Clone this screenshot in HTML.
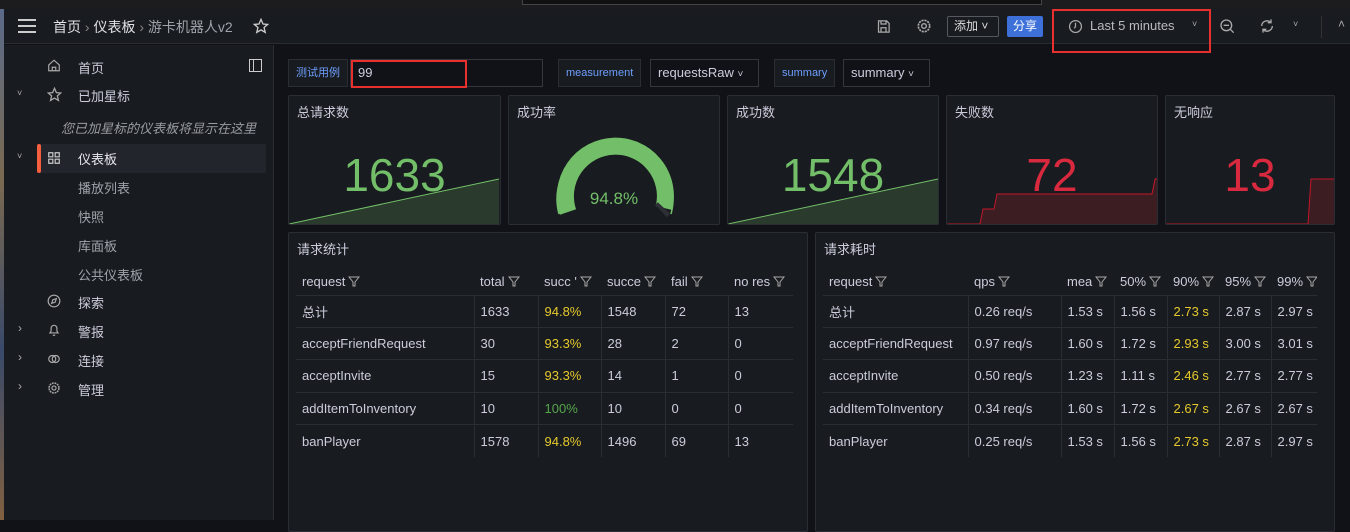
<!DOCTYPE html>
<html><head><meta charset="utf-8"><style>
*{box-sizing:border-box;margin:0;padding:0}
body{width:1350px;height:520px;overflow:hidden;background:#111217;font-family:"Liberation Sans","Noto Sans CJK SC",sans-serif;color:#ccccdc;font-size:13px;position:relative}
.a{position:absolute}
.top{left:0;top:0;width:1350px;height:9px;background:#1c1c1e}
.hdr{left:4px;top:9px;width:1346px;height:35px;background:#181b1f;border-bottom:1px solid #2a2c31}
.side{left:4px;top:45px;width:270px;height:475px;background:#181b1f;border-right:1px solid #2a2c31}
.panel{background:#181b1f;border:1px solid #2a2d33;border-radius:2px}
.pt{position:absolute;left:8px;top:6px;font-size:13px;color:#ccccdc}
.big{position:absolute;width:100%;text-align:center;font-size:46px}
.vl{background:#181b1f;border:1px solid #2a2d33;height:28px;color:#6e9fff;font-size:11px;line-height:26px;padding:0 7px}
.vi{border:1px solid #34373d;height:28px;line-height:26px;padding:0 7px;font-size:13px;color:#ccccdc}
.nav{position:absolute;left:78px;font-size:13px;color:#ccccdc}
.sub{color:#a0a3ab}
.ic{position:absolute;left:47px}
td{height:32.4px;border-top:1px solid #2a2d33;border-left:1px solid #2a2d33;padding-left:6px;white-space:nowrap;overflow:hidden;font-size:13px;color:#ccccdc}
td:first-child{border-left:none}
th{height:27px;text-align:left;font-weight:normal;padding-left:6px;white-space:nowrap;overflow:hidden;font-size:13px;color:#ccccdc}
table{border-collapse:collapse;table-layout:fixed;position:absolute}
.y{color:#e5c92d}.g{color:#56a64b}
.f{display:inline-block;width:12px;height:11px;vertical-align:-1px;margin-left:3px}
</style></head><body>
<div class="a top"></div>
<div class="a" style="left:522px;top:0;width:520px;height:5px;border:1px solid #444;border-top:none;background:#111"></div>
<div class="a" style="left:0;top:9px;width:4px;height:511px;background:linear-gradient(#5a6a8a,#7a6a50,#3a4a6a,#806040)"></div>
<div class="a hdr"></div>
<!-- header -->
<div class="a" style="left:18px;top:19px;width:18px;height:14px;border-top:2px solid #ccc;border-bottom:2px solid #ccc"><div style="margin-top:4px;height:2px;background:#ccc"></div></div>
<div class="a" style="left:53px;top:17px;font-size:14px;color:#e0e0e8">首页 <span style="color:#888">›</span> 仪表板 <span style="color:#888">›</span> <span style="color:#a0a3ab">游卡机器人v2</span></div>
<svg class="a" style="left:253px;top:18px" width="16" height="16" viewBox="0 0 24 24"><path d="M12 2l3 7 7 .6-5.4 4.6 1.7 7.3L12 17.8 5.7 21.5l1.7-7.3L2 9.6 9 9z" fill="none" stroke="#ccc" stroke-width="2"/></svg>
<svg class="a" style="left:876px;top:19px" width="15" height="15" viewBox="0 0 24 24"><path d="M4 3h13l4 4v14H4z M8 3v5h8V3 M8 14h8v7H8z" fill="none" stroke="#aaa" stroke-width="2"/></svg>
<svg class="a" style="left:916px;top:18px" width="16" height="16" viewBox="0 0 24 24"><circle cx="12" cy="12" r="3.5" fill="none" stroke="#aaa" stroke-width="2"/><circle cx="12" cy="12" r="8.5" fill="none" stroke="#aaa" stroke-width="2.5" stroke-dasharray="3.2 1.3"/></svg>
<div class="a" style="left:947px;top:16px;width:52px;height:21px;border:1px solid #55585e;border-radius:2px;font-size:12px;line-height:19px;padding-left:6px;color:#ddd">添加 ˅</div>
<div class="a" style="left:1007px;top:16px;width:36px;height:21px;background:#3d71d9;border-radius:2px;font-size:12px;line-height:21px;text-align:center;color:#fff">分享</div>
<div class="a" style="left:1052px;top:9px;width:159px;height:44px;border:2px solid #e8302f"></div>
<svg class="a" style="left:1068px;top:19px" width="15" height="15" viewBox="0 0 24 24"><circle cx="12" cy="12" r="9.5" fill="none" stroke="#aaa" stroke-width="2"/><path d="M12 6v6l-2 3" fill="none" stroke="#aaa" stroke-width="2"/></svg>
<div class="a" style="left:1090px;top:18px;font-size:13px;color:#b8bac0">Last 5 minutes</div>
<div class="a" style="left:1192px;top:19px;font-size:9px;color:#aaa">˅</div>
<svg class="a" style="left:1219px;top:18px" width="16" height="16" viewBox="0 0 24 24"><circle cx="11" cy="11" r="8" fill="none" stroke="#aaa" stroke-width="2"/><path d="M7 11h8M17 17l5 5" stroke="#aaa" stroke-width="2"/></svg>
<svg class="a" style="left:1259px;top:18px" width="16" height="16" viewBox="0 0 24 24"><path d="M20 12a8 8 0 0 1-14 5M4 12a8 8 0 0 1 14-5M18 2v5h-5M6 22v-5h5" fill="none" stroke="#aaa" stroke-width="2"/></svg>
<div class="a" style="left:1293px;top:19px;font-size:9px;color:#aaa">˅</div>
<div class="a" style="left:1321px;top:16px;width:1px;height:22px;background:#333"></div>
<div class="a" style="left:1338px;top:17px;font-size:12px;color:#aaa">˄</div>
<!-- sidebar -->
<div class="a side"></div>
<div class="a" style="left:37px;top:144px;width:229px;height:29px;background:#22252b;border-radius:2px"></div>
<div class="a" style="left:37px;top:144px;width:4px;height:29px;background:#f55f3e;border-radius:2px"></div>
<svg class="ic" style="top:58px" width="14" height="15" viewBox="0 0 24 24"><path d="M3 11L12 3l9 8v10H3z M9 21v-6h6v6" fill="none" stroke="#aaa" stroke-width="2"/></svg>
<div class="nav" style="top:58px">首页</div>
<div class="a" style="left:249px;top:59px;width:13px;height:13px;border:1.5px solid #ccc"><div style="width:4px;height:100%;border-right:1.5px solid #ccc"></div></div>
<div class="a" style="left:17px;top:88px;color:#aaa;font-size:9px">˅</div>
<svg class="ic" style="top:87px" width="15" height="15" viewBox="0 0 24 24"><path d="M12 2l3 7 7 .6-5.4 4.6 1.7 7.3L12 17.8 5.7 21.5l1.7-7.3L2 9.6 9 9z" fill="none" stroke="#aaa" stroke-width="2"/></svg>
<div class="nav" style="top:86px">已加星标</div>
<div class="a" style="left:61px;top:118px;font-style:italic;color:#9a9ca4;font-size:13px">您已加星标的仪表板将显示在这里</div>
<div class="a" style="left:17px;top:151px;color:#aaa;font-size:9px">˅</div>
<svg class="ic" style="top:151px" width="14" height="14" viewBox="0 0 24 24"><path d="M3 3h7v7H3zM14 3h7v7h-7zM3 14h7v7H3zM14 14h7v7h-7z" fill="none" stroke="#ccc" stroke-width="2"/></svg>
<div class="nav" style="top:149px;color:#e8e8ee">仪表板</div>
<div class="nav sub" style="top:178px">播放列表</div>
<div class="nav sub" style="top:207px">快照</div>
<div class="nav sub" style="top:236px">库面板</div>
<div class="nav sub" style="top:265px">公共仪表板</div>
<svg class="ic" style="top:294px" width="14" height="14" viewBox="0 0 24 24"><circle cx="12" cy="12" r="10" fill="none" stroke="#aaa" stroke-width="2"/><path d="M16 8l-2 6-6 2 2-6z" fill="none" stroke="#aaa" stroke-width="2"/></svg>
<div class="nav" style="top:293px">探索</div>
<div class="a" style="left:18px;top:321px;color:#aaa;font-size:12px">›</div>
<svg class="ic" style="top:323px" width="14" height="14" viewBox="0 0 24 24"><path d="M5 17h14l-2-3V9a5 5 0 0 0-10 0v5zM10 21h4" fill="none" stroke="#aaa" stroke-width="2"/></svg>
<div class="nav" style="top:322px">警报</div>
<div class="a" style="left:18px;top:350px;color:#aaa;font-size:12px">›</div>
<svg class="ic" style="top:352px" width="14" height="14" viewBox="0 0 24 24"><circle cx="9" cy="12" r="6" fill="none" stroke="#aaa" stroke-width="2"/><circle cx="15" cy="12" r="6" fill="none" stroke="#aaa" stroke-width="2"/></svg>
<div class="nav" style="top:351px">连接</div>
<div class="a" style="left:18px;top:379px;color:#aaa;font-size:12px">›</div>
<svg class="ic" style="top:381px" width="14" height="14" viewBox="0 0 24 24"><circle cx="12" cy="12" r="3.5" fill="none" stroke="#aaa" stroke-width="2"/><circle cx="12" cy="12" r="8.5" fill="none" stroke="#aaa" stroke-width="2.5" stroke-dasharray="3.2 1.3"/></svg>
<div class="nav" style="top:380px">管理</div>
<!-- variables -->
<div class="a vl" style="left:288px;top:59px">测试用例</div>
<div class="a vi" style="left:350px;top:59px;width:193px">99</div>
<div class="a" style="left:351px;top:60px;width:116px;height:28px;border:2px solid #e8302f"></div>
<div class="a vl" style="left:558px;top:59px">measurement</div>
<div class="a vi" style="left:650px;top:59px;width:109px">requestsRaw <span style="font-size:10px">˅</span></div>
<div class="a vl" style="left:774px;top:59px">summary</div>
<div class="a vi" style="left:843px;top:59px;width:87px">summary <span style="font-size:10px">˅</span></div>
<!-- stat panels -->
<div class="a panel" style="left:288px;top:95px;width:213px;height:130px;overflow:hidden"><div class="pt">总请求数</div>
<svg class="a" style="left:0;top:0" width="213" height="130"><path d="M0 130 L0 128 L210 83 L210 130Z" fill="#2a3a2c"/><path d="M0 128 L210 83" stroke="#73bf69" stroke-width="1"/></svg>
<div class="big" style="top:52px;color:#73bf69">1633</div></div>
<div class="a panel" style="left:508px;top:95px;width:212px;height:130px;overflow:hidden"><div class="pt">成功率</div>
<svg class="a" style="left:0;top:0" width="212" height="130"><path d="M50 118 A58 58 0 1 1 162 118" fill="none" stroke="#73bf69" stroke-width="1.5"/><path d="M59 116 A50 50 0 1 1 155 112" fill="none" stroke="#73bf69" stroke-width="17"/><path d="M152 115 A50 50 0 0 0 155 112" fill="none" stroke="#2c2f35" stroke-width="17"/></svg>
<div class="a" style="left:0;width:100%;text-align:center;top:93px;font-size:17px;color:#73bf69">94.8%</div></div>
<div class="a panel" style="left:727px;top:95px;width:212px;height:130px;overflow:hidden"><div class="pt">成功数</div>
<svg class="a" style="left:0;top:0" width="212" height="130"><path d="M0 130 L0 128 L210 83 L210 130Z" fill="#2a3a2c"/><path d="M0 128 L210 83" stroke="#73bf69" stroke-width="1"/></svg>
<div class="big" style="top:52px;color:#73bf69">1548</div></div>
<div class="a panel" style="left:946px;top:95px;width:212px;height:130px;overflow:hidden"><div class="pt">失败数</div>
<svg class="a" style="left:0;top:0" width="212" height="130"><path d="M0 130V128H33L36 113H47L50 98H205L208 83H212V130Z" fill="#3c1d22"/><path d="M0 128H33L36 113H47L50 98H205L208 83H212" fill="none" stroke="#c4162a" stroke-width="1"/></svg>
<div class="big" style="top:52px;color:#d8293f">72</div></div>
<div class="a panel" style="left:1165px;top:95px;width:170px;height:130px;overflow:hidden"><div class="pt">无响应</div>
<svg class="a" style="left:0;top:0" width="170" height="130"><path d="M0 130V128H142L145 83H170V130Z" fill="#3c1d22"/><path d="M0 128H142L145 83H170" fill="none" stroke="#c4162a" stroke-width="1"/></svg>
<div class="big" style="top:52px;color:#d8293f">13</div></div>
<!-- tables -->
<div class="a panel" style="left:288px;top:232px;width:520px;height:300px"><div class="pt">请求统计</div>
<table style="left:7px;top:35px;width:497px">
<colgroup><col style="width:178px"><col style="width:64px"><col style="width:63px"><col style="width:64px"><col style="width:63px"><col style="width:65px"></colgroup>
<tr><th>request<svg class="f" viewBox="0 0 12 11"><path d="M1 1h10L7 6v4H5V6z" fill="none" stroke="#aaa"/></svg></th><th>total<svg class="f" viewBox="0 0 12 11"><path d="M1 1h10L7 6v4H5V6z" fill="none" stroke="#aaa"/></svg></th><th>succ '<svg class="f" viewBox="0 0 12 11"><path d="M1 1h10L7 6v4H5V6z" fill="none" stroke="#aaa"/></svg></th><th>succe<svg class="f" viewBox="0 0 12 11"><path d="M1 1h10L7 6v4H5V6z" fill="none" stroke="#aaa"/></svg></th><th>fail<svg class="f" viewBox="0 0 12 11"><path d="M1 1h10L7 6v4H5V6z" fill="none" stroke="#aaa"/></svg></th><th>no res<svg class="f" viewBox="0 0 12 11"><path d="M1 1h10L7 6v4H5V6z" fill="none" stroke="#aaa"/></svg></th></tr>
<tr><td>总计</td><td>1633</td><td class="y">94.8%</td><td>1548</td><td>72</td><td>13</td></tr>
<tr><td>acceptFriendRequest</td><td>30</td><td class="y">93.3%</td><td>28</td><td>2</td><td>0</td></tr>
<tr><td>acceptInvite</td><td>15</td><td class="y">93.3%</td><td>14</td><td>1</td><td>0</td></tr>
<tr><td>addItemToInventory</td><td>10</td><td class="g">100%</td><td>10</td><td>0</td><td>0</td></tr>
<tr><td>banPlayer</td><td>1578</td><td class="y">94.8%</td><td>1496</td><td>69</td><td>13</td></tr>
</table></div>
<div class="a panel" style="left:815px;top:232px;width:520px;height:300px"><div class="pt">请求耗时</div>
<table style="left:7px;top:35px;width:494px">
<colgroup><col style="width:145px"><col style="width:93px"><col style="width:53px"><col style="width:53px"><col style="width:52px"><col style="width:52px"><col style="width:46px"></colgroup>
<tr><th>request<svg class="f" viewBox="0 0 12 11"><path d="M1 1h10L7 6v4H5V6z" fill="none" stroke="#aaa"/></svg></th><th>qps<svg class="f" viewBox="0 0 12 11"><path d="M1 1h10L7 6v4H5V6z" fill="none" stroke="#aaa"/></svg></th><th>mea<svg class="f" viewBox="0 0 12 11"><path d="M1 1h10L7 6v4H5V6z" fill="none" stroke="#aaa"/></svg></th><th>50%<svg class="f" viewBox="0 0 12 11"><path d="M1 1h10L7 6v4H5V6z" fill="none" stroke="#aaa"/></svg></th><th>90%<svg class="f" viewBox="0 0 12 11"><path d="M1 1h10L7 6v4H5V6z" fill="none" stroke="#aaa"/></svg></th><th>95%<svg class="f" viewBox="0 0 12 11"><path d="M1 1h10L7 6v4H5V6z" fill="none" stroke="#aaa"/></svg></th><th>99%<svg class="f" viewBox="0 0 12 11"><path d="M1 1h10L7 6v4H5V6z" fill="none" stroke="#aaa"/></svg></th></tr>
<tr><td>总计</td><td>0.26 req/s</td><td>1.53 s</td><td>1.56 s</td><td class="y">2.73 s</td><td>2.87 s</td><td>2.97 s</td></tr>
<tr><td>acceptFriendRequest</td><td>0.97 req/s</td><td>1.60 s</td><td>1.72 s</td><td class="y">2.93 s</td><td>3.00 s</td><td>3.01 s</td></tr>
<tr><td>acceptInvite</td><td>0.50 req/s</td><td>1.23 s</td><td>1.11 s</td><td class="y">2.46 s</td><td>2.77 s</td><td>2.77 s</td></tr>
<tr><td>addItemToInventory</td><td>0.34 req/s</td><td>1.60 s</td><td>1.72 s</td><td class="y">2.67 s</td><td>2.67 s</td><td>2.67 s</td></tr>
<tr><td>banPlayer</td><td>0.25 req/s</td><td>1.53 s</td><td>1.56 s</td><td class="y">2.73 s</td><td>2.87 s</td><td>2.97 s</td></tr>
</table></div>
</body></html>
